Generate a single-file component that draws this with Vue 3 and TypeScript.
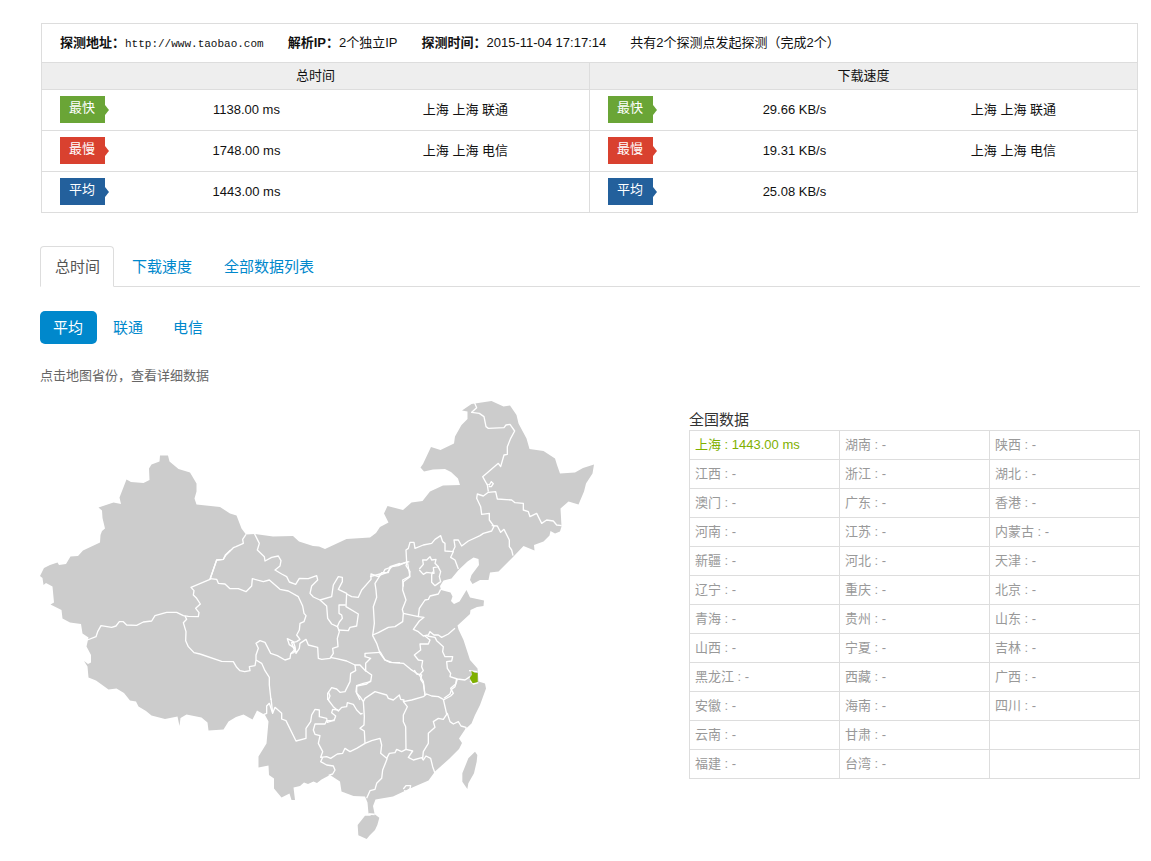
<script setup lang="ts">
import { ref } from 'vue'

interface Metric {
  value: string
  place: string
}

interface ResultRow {
  kind: 'fast' | 'slow' | 'mean'
  label: string
  metrics: Metric[]
}

interface Sheet {
  x: number
  y: number
  lines: string[]
}

const results: ResultRow[] = [
  {
    kind: 'fast',
    label: '最快',
    metrics: [
      { value: '1138.00 ms', place: '上海 上海 联通' },
      { value: '29.66 KB/s', place: '上海 上海 联通' },
    ],
  },
  {
    kind: 'slow',
    label: '最慢',
    metrics: [
      { value: '1748.00 ms', place: '上海 上海 电信' },
      { value: '19.31 KB/s', place: '上海 上海 电信' },
    ],
  },
  {
    kind: 'mean',
    label: '平均',
    metrics: [
      { value: '1443.00 ms', place: '' },
      { value: '25.08 KB/s', place: '' },
    ],
  },
]

const tabs = ['总时间', '下载速度', '全部数据列表']
const carriers = ['平均', '联通', '电信']
const activeTab = ref(0)
const activeCarrier = ref(0)

const provinces: string[][] = [
  ['上海', '湖南', '陕西'],
  ['江西', '浙江', '湖北'],
  ['澳门', '广东', '香港'],
  ['河南', '江苏', '内蒙古'],
  ['新疆', '河北', '天津'],
  ['辽宁', '重庆', '北京'],
  ['青海', '贵州', '山东'],
  ['山西', '宁夏', '吉林'],
  ['黑龙江', '西藏', '广西'],
  ['安徽', '海南', '四川'],
  ['云南', '甘肃', ''],
  ['福建', '台湾', ''],
]
const measured: Record<string, string> = { 上海: '1443.00 ms' }

const mainland =
  'M40 576 44 568 50 565 57.5 562.5 59 565 66 564 70.5 556.5 78 556 83 550.5 100 542.5 100.5 535 102 531 105 528.5 102.5 518 102 510.5 98.5 507.5 113.5 502.5 121 504 119.5 497.5 126.5 479.5 131 482 143.5 483 149.5 480 149 468.5 151.5 464.5 159.5 461.5 160 455.5 168 455.5 169.5 461.5 178.5 469 190 472.5 196.5 483.5 196.5 491.5 194.5 498.5 196.5 504.5 220 507 230 513.5 236.5 515.5 241.5 528.5 246 534.5 255 534 273 536.5 293 536 299 541.5 313 546 319 546.5 325 549 346.5 539 370 537.5 376 533 380 527 388.5 522.5 384 513.5 387.5 506 403 510 411.5 502.5 422.5 501 430 491.5 443 485.5 460 485 458 478.5 451 472 445 469 433 469.5 424 471.5 420.5 467.5 423 464 431 447 440.5 450 454 443.5 455 436.5 461.5 425 467.5 419 467.5 411.5 462 410.5 471.5 404 491.5 401 503.5 406.5 510 405.5 516.5 415 518.5 423.5 526.5 438.5 529.5 449 543.5 451 555 458.5 557 465 560 473.5 575 472.5 583 468 594 464.5 592.5 473.5 586 483.5 584 491.5 578.5 504.5 568.5 501.5 560.5 508.5 561.5 526.5 560 531.5 555 533.5 550.5 531 549.5 535.5 543.5 541.5 534 545 534.5 550.5 523.5 546 513.5 556.5 498.5 571.5 490 572.5 488.5 580 480 580 472.5 584 470 580 471.5 575 479 565 478.5 559 473.5 557.5 467.5 561.5 458.5 570 451.5 578.5 443.5 580.5 440 586 441 590 450.5 592.5 452.5 596.5 451 601 454 604 459.5 601.5 466.5 590 470 597.5 484 600.5 483.5 606 477 607 470.5 610 470 614 457.5 625.5 458.5 629.5 463.5 640 470 660 477.5 668.5 478.5 681.5 485 683.5 486 688.5 480 705 475 715 471.5 723.5 465 729.5 459 738.5 462 743 459 749 449 759 435 771.5 428.5 780.5 410 788.5 401.5 792.5 393 796.5 375.5 799.5 373 806 374.5 813.5 368.5 813.5 367.5 802.5 365 796.5 353.5 796 341.5 791.5 340 781.5 330 775 321.5 779.5 317 783 313.5 781.5 308 784 304 782.5 300 786 293.5 787.5 295 800 291.5 800 289.5 793.5 281.5 797.5 274 788.5 274 778.5 269 775 268.5 765.5 258.5 767.5 258.5 756.5 266.5 743.5 268.5 721.5 265 715 257 710.5 252.5 719.5 243.5 714.5 236 717 228.5 721.5 223.5 729.5 208.5 730.5 207.5 722.5 201.5 717.5 186.5 714.5 180.5 718 179.5 726 177.5 716.5 165 719 151.5 715.5 146 711 138.5 706.5 136 701.5 130 700.5 124 693 116.5 688.5 108.5 689.5 96 680.5 88.5 677.5 87.5 666.5 84 661 88 664 91 662.5 91 655 86.5 646.5 88.5 637.5 82.5 633.5 81 624 70 622.5 62.5 618.5 61.5 610 50.5 604.5 54 602.5 52.5 586.5 46 583 43.5 585 42.5 578Z'

const sheets: Sheet[] = [
  {
    x: -30,
    y: 120,
    lines: [
      'M172 600 198 590 203 575 213 557 245 562 258 558 268 545 280 545 290 555 320 556 340 546 365 543 375 527 410 517 440 517 460 527 475 529 505 530 507 518 497 505 511 492 500 475 490 465 492 452 483 442 540 418 560 360 580 358 586 345 602 330',
    ],
  },
  {
    x: 480,
    y: 300,
    lines: [
      'M30 238 50 180 70 178 78 165 100 143 108 140 130 130 128 118 138 103',
      'M163 100 178 130 172 150 193 170 195 183 215 172 235 168 243 182 240 198 225 210 245 222 260 230 268 246 287 253 298 235 325 236 350 227 353 240 335 258 330 280 340 291 360 300 395 290 400 255 415 230 427 232 427 245 415 268 440 280 438 320 475 342 470 378 450 382 445 392 415 390',
      'M360 300 380 318 383 355 395 372 412 380 418 366 427 355 425 345 417 340 417 315 437 315',
      'M412 378 418 395 412 415 414 440 398 445 400 460 390 475 365 478 355 475 353 442 325 435 318 418 300 430 298 445 288 460 285 440 280 425 262 416 268 434 285 445 282 458 272 460',
      'M30 236 50 238 55 250 75 252 90 266 115 266 138 275 155 258 157 236 190 245 208 240 240 268 265 273 295 290 308 318 312 340 318 347 312 365 300 370 298 390 290 405 300 418 290 425 275 428 283 450 272 462 270 475 255 480 232 467 212 460 195 427 180 422 168 430 175 445 168 465 168 480 165 497 148 500 150 512 134 515 120 512 110 502 100 485 65 484 0 462',
      'M168 480 185 490 195 512 208 532 208 555 213 600',
      'M440 282 455 290 475 292 485 270 513 238 513 222 535 230 545 218 565 218 570 200 600 190',
      'M543 222 525 250 528 270 530 292 520 320 523 370 518 407 530 430 540 460 555 480 575 487 600 488',
      'M390 472 410 476 440 483 465 495 480 495 497 513 497 490 512 475 495 470 495 460 540 457',
      'M497 512 515 525 512 545 490 550 470 557 468 575 480 600',
      'M465 495 467 512 452 520 450 545 435 575 420 577 410 567 395 563 383 580 383 600',
    ],
  },
  {
    x: 90,
    y: 600,
    lines: [
      'M345 48 350 58 340 68 348 95 347 122 355 140 372 158 390 162',
    ],
  },
  {
    x: 630,
    y: 810,
    lines: [
      'M63 85 68 130 75 112 95 130 95 147 108 152 138 213 168 205 168 175 182 155 185 135 195 118 208 120 208 140 230 145 232 157 252 150',
      'M68 130 58 100 50 108 50 130 40 134',
      'M235 65 240 78 235 90 250 110 265 123 275 112 290 110 292 98 310 103 320 120 332 132 338 130',
      'M362 32 350 42 320 48 320 70 330 80 340 95 343 140 342 165 330 175 343 183 345 220',
      'M265 120 248 118 245 128 257 138 252 152 230 152 225 162 195 162 190 180 195 193 210 197 205 220 218 245 212 262 230 260 242 265 262 252 278 250 285 235 300 245 320 235 345 220',
      'M218 262 212 275 230 285 250 288 255 300 248 312 236 316',
    ],
  },
  {
    x: 960,
    y: 810,
    lines: [
      'M10 95 15 85 45 65 80 75 85 85 100 90 118 75 122 88 132 90 130 95 142 110 130 135 130 155 137 170 138 240',
      'M130 95 155 90 190 80 200 72 215 78 235 80 250 88 255 110 260 132',
      'M15 220 35 212 60 205 65 225 62 250 80 265 88 250 105 248 110 238 125 245 138 238 158 243 145 262 160 270 185 263 190 270 198 258 212 265 218 290 225 310',
      'M188 265 190 245 205 220 205 190 225 172 220 155 235 145 250 148 262 130 270 155 280 162 295 155 303 168 318 172 318 180',
      'M250 90 272 78 280 70 272 55 287 42 290 25',
      'M82 265 68 300 65 325 50 340 45 358 30 362 20 385',
      'M130 357 138 347 152 347 150 356 140 364 132 362',
      'M163 0 170 12 185 15 182 28 190 40 195 75',
      'M26 432 44 434',
    ],
  },
  {
    x: 990,
    y: 480,
    lines: [
      'M0 50 30 42 40 38 45 28 80 15 118 5',
      'M8 225 25 218 55 202 75 200 98 185 100 160 97 148 108 120 98 90 100 65 120 50 113 10',
      'M100 160 145 170 148 145 165 120 175 118 180 108 205 102 212 88',
      'M145 170 162 172 148 183 130 208 145 215 160 228 175 225 180 215 192 225 205 225 215 232 235 222 255 205',
      'M172 228 195 232 200 242 220 260 218 275 225 290 248 290 245 303 230 305 232 325 242 340 240 350 262 357 285 360 300 350',
      'M165 228 180 240 175 252 150 252 152 270 133 285 145 300 158 302 155 320 160 332 148 345',
      'M30 275 45 300 60 307 100 310 122 328 148 345 160 365 165 405',
      'M262 357 255 380 245 388 240 402 222 415',
      'M297 332 322 335',
      'M300 362 310 372 325 368',
    ],
  },
  {
    x: 1020,
    y: -15,
    lines: [
      'M118 522 130 508 128 495 140 495 150 485 155 495 168 493 165 505 175 515 160 518 162 535 140 532 130 538 118 525',
      'M174 515 182 530 178 545 182 560 165 572 155 562 155 540 158 530',
      'M0 540 22 532 35 515 55 512 82 500 78 512 90 530 88 545 68 555 70 575',
      'M80 502 78 465 85 460 90 442 102 442 105 460 130 450 155 445 165 433 182 422 188 440 195 445 195 468 220 470 212 487 225 495 235 522',
      'M218 470 225 455 222 435 235 435 245 453 265 438 300 422 310 415 335 408 342 394 328 375 328 355 305 358 302 335 290 310 292 297 310 303 325 292 347 290 352 312 395 315 405 323 430 325 430 345 445 350 450 365 470 355 485 385 500 375 520 378 530 390 545 392',
      'M335 392 352 393 362 412 372 403 388 435 388 455 395 465 399 482',
      'M325 290 322 270 308 245 355 205 362 215 372 180 382 178 382 155 392 130 404 108 390 88 378 90 372 98 325 100 318 95 312 65 298 55 275 52 290 38 283 22',
      'M320 267 328 270 334 260 340 266 334 275 326 275',
    ],
  },
]
</script>

<template>
  <main class="page">
    <table class="summary">
      <colgroup>
        <template v-for="n in 2" :key="n">
          <col class="c-tag" />
          <col class="c-value" />
          <col class="c-place" />
        </template>
      </colgroup>
      <thead>
        <tr class="info-row">
          <td colspan="6">
            <div class="info">
              <span><b>探测地址：</b><span class="url">http://www.taobao.com</span></span>
              <span><b>解析IP：</b>2个独立IP</span>
              <span><b>探测时间：</b>2015-11-04 17:17:14</span>
              <span>共有2个探测点发起探测（完成2个）</span>
            </div>
          </td>
        </tr>
        <tr class="head-row">
          <th colspan="3" scope="colgroup">总时间</th>
          <th colspan="3" scope="colgroup" class="split">下载速度</th>
        </tr>
      </thead>
      <tbody>
        <tr v-for="row in results" :key="row.kind">
          <template v-for="(m, i) in row.metrics" :key="i">
            <td class="tag-cell" :class="{ split: i === 1 }">
              <span class="tag" :class="row.kind">{{ row.label }}</span>
            </td>
            <td>{{ m.value }}</td>
            <td>{{ m.place }}</td>
          </template>
        </tr>
      </tbody>
    </table>

    <nav class="tabs">
      <a
        v-for="(t, i) in tabs"
        :key="t"
        href="#"
        :class="{ active: i === activeTab }"
        @click.prevent="activeTab = i"
        >{{ t }}</a
      >
    </nav>

    <nav class="pills">
      <a
        v-for="(c, i) in carriers"
        :key="c"
        href="#"
        :class="{ active: i === activeCarrier }"
        @click.prevent="activeCarrier = i"
        >{{ c }}</a
      >
    </nav>

    <p class="hint">点击地图省份，查看详细数据</p>

    <div class="detail">
      <svg class="map" viewBox="0 0 1668 1320" role="img" aria-label="中国地图">
        <g class="land">
          <path :d="mainland" transform="scale(3) translate(-40 -400)" />
          <path
            d="M345 437 360 437 372 431 388 443 382 465 375 480 360 495 350 507 325 496 323 465Z"
            transform="translate(630 810)"
          />
          <path
            d="M345 245 352 255 350 275 342 310 325 340 322 357 307 335 307 310 325 265Z"
            transform="translate(960 810)"
          />
        </g>
        <g v-for="(s, i) in sheets" :key="i" class="borders" :transform="`translate(${s.x} ${s.y})`">
          <path v-for="(d, k) in s.lines" :key="k" :d="d" />
        </g>
        <path
          class="hit"
          d="M304 332 314 338 323 339 323 366 308 370 299 354 306 344Z"
          transform="translate(990 480)"
        />
      </svg>

      <section class="national">
        <h2>全国数据</h2>
        <table class="provinces">
          <tbody>
            <tr v-for="(row, r) in provinces" :key="r">
              <td v-for="(name, c) in row" :key="c" :class="{ good: measured[name] }">
                <template v-if="name">{{ name }} : {{ measured[name] ?? '-' }}</template>
              </td>
            </tr>
          </tbody>
        </table>
      </section>
    </div>
  </main>
</template>

<style>
body {
  margin: 0;
  background: #fff;
}
</style>

<style scoped>
.page {
  padding: 23px 11px 20px 40px;
  font: 13px/20px 'Liberation Sans', 'Noto Sans CJK SC', sans-serif;
  color: #111;
}

table {
  border-collapse: collapse;
  table-layout: fixed;
}

.summary {
  width: calc(100% - 3px);
  margin-left: 1px;
  border: 1px solid #ddd;
}

.c-tag {
  width: 10%;
}

.c-value {
  width: 17.4%;
}

.c-place {
  width: 22.6%;
}

.summary tr {
  height: 41px;
  border-top: 1px solid #ddd;
}

.summary td,
.summary th {
  padding: 0;
  text-align: center;
  font-weight: normal;
}

.summary .info-row {
  height: 39px;
}

.summary .head-row {
  height: 27px;
  background: #eee;
}

.summary .split {
  border-left: 1px solid #ddd;
}

.info {
  display: flex;
  flex-wrap: wrap;
  gap: 0 24px;
  padding: 0 18px;
}

.url {
  font-family: 'Liberation Mono', monospace;
  font-size: 11px;
}

.summary .tag-cell {
  padding: 0 0 2px 18px;
  text-align: left;
}

.tag {
  position: relative;
  display: block;
  width: 45px;
  box-sizing: border-box;
  padding: 2px 0 5px 9px;
  color: #fff;
  background: var(--tone);
}

.tag::after {
  content: '';
  position: absolute;
  left: 100%;
  top: 9px;
  border: solid transparent;
  border-width: 5px 0 5px 4px;
  border-left-color: var(--tone);
}

.fast {
  --tone: #6aa536;
}

.slow {
  --tone: #d9412f;
}

.mean {
  --tone: #23609c;
}

.tabs,
.pills {
  display: flex;
  font-size: 15px;
}

.tabs a,
.pills a {
  color: #08c;
  text-decoration: none;
}

.tabs {
  gap: 3px;
  margin-top: 33px;
  border-bottom: 1px solid #ddd;
}

.tabs a {
  padding: 10px 13px 9px 14px;
  margin-bottom: -1px;
  border: 1px solid transparent;
  border-radius: 4px 4px 0 0;
}

.tabs a.active {
  color: #555;
  background: #fff;
  border-color: #ddd #ddd #fff;
}

.pills {
  gap: 3px;
  margin-top: 24px;
}

.pills a {
  padding: 7px 14px 6px 13px;
  border-radius: 5px;
}

.pills a.active {
  color: #fff;
  background: #08c;
}

.hint {
  margin: 22px 0 14px;
  color: #666;
}

.detail {
  display: grid;
  grid-template-columns: minmax(0, 1fr) 451px;
  column-gap: 40px;
  align-items: start;
}

.map {
  display: block;
  width: 100%;
  max-width: 556px;
}

.land {
  fill: #ccc;
}

.borders {
  fill: none;
  stroke: #fff;
  stroke-width: 4;
  stroke-linejoin: round;
}

.hit {
  fill: #80b000;
}

.national h2 {
  margin: 10px 0 0;
  font-size: 15px;
  font-weight: normal;
  line-height: 20px;
  color: #333;
}

.provinces {
  width: 100%;
}

.provinces td {
  height: 28px;
  padding: 0 5px;
  border: 1px solid #ddd;
  color: #999;
}

.provinces td.good {
  color: #80b000;
}
</style>
